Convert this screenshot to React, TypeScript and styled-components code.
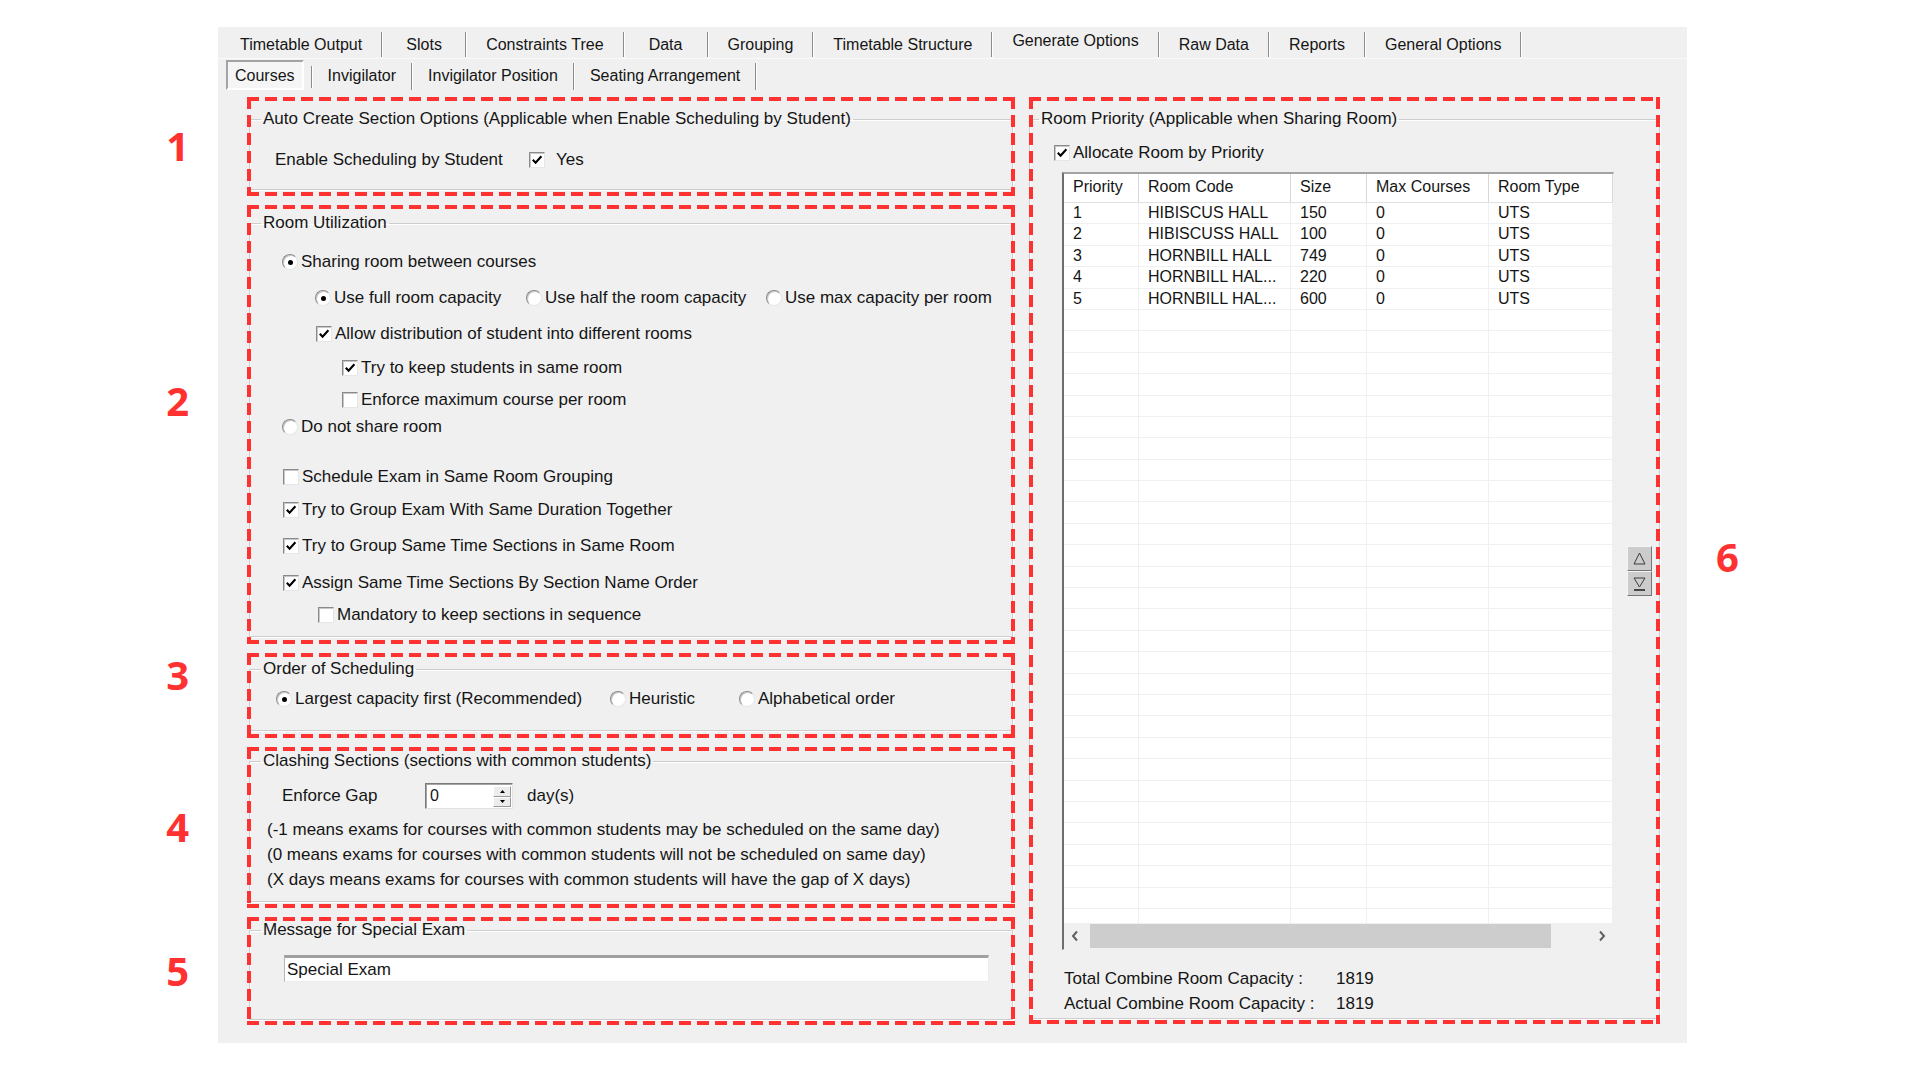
import styled, { createGlobalStyle } from "styled-components";

// Generate Options > Courses settings page of the exam timetabling tool

type RoomRow = {
    priority: string;
    code: string;
    size: string;
    maxCourses: string;
    type: string;
};

const rooms: RoomRow[] = [
    { priority: "1", code: "HIBISCUS HALL", size: "150", maxCourses: "0", type: "UTS" },
    { priority: "2", code: "HIBISCUSS HALL", size: "100", maxCourses: "0", type: "UTS" },
    { priority: "3", code: "HORNBILL HALL", size: "749", maxCourses: "0", type: "UTS" },
    { priority: "4", code: "HORNBILL HAL...", size: "220", maxCourses: "0", type: "UTS" },
    { priority: "5", code: "HORNBILL HAL...", size: "600", maxCourses: "0", type: "UTS" },
];

const mainTabs = [
    "Timetable Output",
    "Slots",
    "Constraints Tree",
    "Data",
    "Grouping",
    "Timetable Structure",
    "Generate Options",
    "Raw Data",
    "Reports",
    "General Options",
];

const subTabs = ["Courses", "Invigilator", "Invigilator Position", "Seating Arrangement"];

const GlobalStyle = createGlobalStyle`
    html, body {
        margin: 0;
        background: #ffffff;
    }
    body {
        font-family: "Liberation Sans", Arial, sans-serif;
        font-size: 17px;
        color: #151515;
    }
`;

const Page = styled.div`
    width: 1920px;
    height: 1080px;
    padding: 27px 0 0 218px;
    box-sizing: border-box;
`;

const Window = styled.div`
    width: 1469px;
    height: 1016px;
    background: #f0f0f0;
    display: flex;
    flex-direction: column;
`;

const TabStrip = styled.div`
    display: flex;
    height: 31px;
    padding-left: 2px;
    font-size: 16px;
`;

const Tab = styled.div<{ $active?: boolean }>`
    position: relative;
    display: flex;
    align-items: center;
    justify-content: center;
    min-width: 84px;
    padding: ${p => (p.$active ? "0 20px 4px" : "5px 20px 0")};
    box-sizing: border-box;
    white-space: nowrap;

    &::after {
        content: "";
        position: absolute;
        right: 0;
        top: 5px;
        bottom: 1px;
        width: 1px;
        background: #8c8c8c;
        box-shadow: 1px 0 0 #ffffff;
    }
`;

const SubTabStrip = styled.div`
    display: flex;
    height: 32px;
    padding-left: 8px;
    border-top: 1px solid #fafafa;
    box-sizing: border-box;
    font-size: 16px;
`;

const SubTab = styled.div<{ $active?: boolean }>`
    position: relative;
    display: flex;
    align-items: center;
    white-space: nowrap;
    padding: 2px ${p => (p.$active ? "7px" : "16px")} 0;
    margin: ${p => (p.$active ? "1px 8px 0 0" : "0")};
    box-sizing: border-box;
    background: ${p => (p.$active ? "#f5f5f5" : "transparent")};
    border: ${p => (p.$active ? "2px solid" : "none")};
    border-color: #a3a3a3 #ffffff #ffffff #a3a3a3;

    &::after {
        content: "";
        position: absolute;
        right: ${p => (p.$active ? "-10px" : "0")};
        top: 4px;
        bottom: 0;
        width: 1px;
        background: #8c8c8c;
        box-shadow: 1px 0 0 #ffffff;
    }
`;

const Body = styled.div`
    display: flex;
    gap: 14px;
    padding: 7px 0 0 29px;
`;

const Column = styled.div<{ $w: number }>`
    width: ${p => p.$w}px;
    display: flex;
    flex-direction: column;
    gap: 9px;
`;

const dash = (dir: string) =>
    `repeating-linear-gradient(${dir}, #ff3131 0 12px, transparent 12px 18px)`;

// red dashed callout frame around a settings group
const Marked = styled.section<{ $pt: number; $pb: number; $px?: number }>`
    position: relative;
    padding: ${p => p.$pt}px ${p => p.$px ?? 2}px ${p => p.$pb}px;

    &::after {
        content: "";
        position: absolute;
        inset: 0;
        pointer-events: none;
        background:
            ${dash("90deg")} top left / 100% 4px no-repeat,
            ${dash("90deg")} bottom left / 100% 4px no-repeat,
            ${dash("180deg")} top left / 4px 100% no-repeat,
            ${dash("180deg")} top right / 4px 100% no-repeat;
    }
`;

const Callout = styled.span<{ $side: "left" | "right"; $shift?: number }>`
    position: absolute;
    top: 50%;
    ${p => (p.$side === "left" ? "right: calc(100% + 58px);" : "left: calc(100% + 56px);")}
    transform: translateY(calc(-50% + ${p => p.$shift ?? 0}px));
    font-family: "Open Sans", "Liberation Sans", sans-serif;
    font-weight: 700;
    font-size: 40px;
    line-height: 1;
    color: #ff3131;
`;

const GroupBox = styled.fieldset<{ $h: number }>`
    margin: 0;
    padding: 0;
    min-width: 0;
    height: ${p => p.$h}px;
    box-sizing: border-box;
    border: 1px solid #cdcdcd;
    box-shadow: inset 1px 1px 0 #ffffff, 1px 1px 0 #ffffff;
    display: flex;
    flex-direction: column;
`;

const Legend = styled.legend<{ $ml?: number }>`
    margin-left: ${p => p.$ml ?? 11}px;
    padding: 0 2px;
    line-height: 18px;
`;

const Row = styled.div<{ $mt?: number; $indent?: number; $h?: number }>`
    display: flex;
    align-items: center;
    height: ${p => p.$h ?? 20}px;
    flex: none;
    white-space: nowrap;
    margin-top: ${p => p.$mt ?? 0}px;
    margin-left: ${p => p.$indent ?? 0}px;
`;

const Choice = styled.div<{ $w?: number }>`
    display: flex;
    align-items: center;
    flex: none;
    ${p => (p.$w ? `width: ${p.$w}px;` : "")}
`;

const Caption = styled.span<{ $w?: number; $ml?: number }>`
    display: inline-block;
    ${p => (p.$w ? `width: ${p.$w}px;` : "")}
    margin-left: ${p => p.$ml ?? 0}px;
`;

const CheckFrame = styled.span<{ $gap?: number }>`
    width: 16px;
    height: 16px;
    flex: none;
    box-sizing: border-box;
    margin-right: ${p => p.$gap ?? 3}px;
    background: #ffffff;
    border: 1px solid;
    border-color: #8a8a8a #e6e6e6 #e6e6e6 #8a8a8a;
    box-shadow: inset 1px 1px 0 #c8c8c8;
    display: inline-flex;
    align-items: center;
    justify-content: center;
`;

const RadioRing = styled.span<{ $on?: boolean }>`
    width: 16px;
    height: 16px;
    flex: none;
    box-sizing: border-box;
    margin-right: 3px;
    border-radius: 50%;
    background: #ffffff;
    border: 1px solid;
    border-color: #8a8a8a #e6e6e6 #e6e6e6 #8a8a8a;
    box-shadow: inset 1px 1px 0 #c8c8c8;
    display: inline-flex;
    align-items: center;
    justify-content: center;

    &::after {
        content: "";
        width: 5px;
        height: 5px;
        border-radius: 50%;
        background: ${p => (p.$on ? "#000000" : "transparent")};
    }
`;

function Check({ on, gap }: { on?: boolean; gap?: number }) {
    return (
        <CheckFrame $gap={gap}>
            {on && (
                <svg width="12" height="12" viewBox="0 0 12 12">
                    <path d="M1.8 5.8 L4.6 8.8 L10.4 2.2" fill="none" stroke="#000" strokeWidth="2.1" />
                </svg>
            )}
        </CheckFrame>
    );
}

const SpinBox = styled.div`
    width: 88px;
    height: 26px;
    box-sizing: border-box;
    display: flex;
    background: #ffffff;
    border: 1px solid;
    border-color: #7a7a7a #e3e3e3 #e3e3e3 #7a7a7a;
    box-shadow: inset 1px 1px 0 #a5a5a5;
`;

const SpinValue = styled.span`
    flex: 1;
    padding: 3px 0 0 4px;
    font-size: 16px;
`;

const SpinButtons = styled.div`
    width: 18px;
    display: flex;
    flex-direction: column;
    margin: 2px 1px 1px 0;
`;

const SpinButton = styled.div`
    flex: 1;
    display: flex;
    align-items: center;
    justify-content: center;
    background: #ececec;
    border: 1px solid;
    border-color: #ffffff #9a9a9a #9a9a9a #ffffff;
`;

const Note = styled.div<{ $mt?: number }>`
    margin: ${p => p.$mt ?? 0}px 0 0 17px;
    line-height: 25px;
    white-space: nowrap;
`;

const TextBox = styled.div`
    margin: 16px 0 0 34px;
    width: 705px;
    height: 27px;
    box-sizing: border-box;
    padding: 2px 0 0 2px;
    background: #ffffff;
    border-top: 3px solid #a0a0a0;
    border-left: 1px solid #b5b5b5;
    border-right: 1px solid #ececec;
    border-bottom: 1px solid #ececec;
`;

const GridArea = styled.div`
    display: flex;
    margin: 9px 0 0 32px;
    gap: 13px;
`;

const Grid = styled.div`
    width: 552px;
    height: 778px;
    box-sizing: border-box;
    display: flex;
    flex-direction: column;
    background: #ffffff;
    font-size: 16px;
    border-top: 2px solid #a3a3a3;
    border-left: 2px solid #6e6e6e;
    border-right: 1px solid #f0f0f0;
    border-bottom: 1px solid #f0f0f0;
`;

const cols = "75px 152px 76px 122px 1fr";

const HeaderRow = styled.div`
    display: grid;
    grid-template-columns: ${cols};
    height: 29px;
    flex: none;
    border-bottom: 1px solid #e2e2e2;
    box-sizing: border-box;
`;

const HeaderCell = styled.div`
    padding-left: 9px;
    line-height: 26px;
    white-space: nowrap;
    border-right: 1px solid #d8d8d8;
    box-shadow: inset -1px 0 0 #ffffff;
`;

const GridBody = styled.div`
    flex: 1;
    overflow: hidden;
`;

const DataRow = styled.div`
    display: grid;
    grid-template-columns: ${cols};
    height: 21.4px;
    box-sizing: border-box;
    border-bottom: 1px solid #f0f0f0;
`;

const DataCell = styled.div`
    padding-left: 9px;
    line-height: 20px;
    white-space: nowrap;
    overflow: hidden;
    border-right: 1px solid #f0f0f0;
`;

const HScroll = styled.div`
    height: 26px;
    flex: none;
    display: flex;
    align-items: stretch;
    background: #f0f0f0;
`;

const ScrollArrow = styled.div`
    width: 22px;
    display: flex;
    align-items: center;
    justify-content: center;
`;

const ScrollTrack = styled.div`
    flex: 1;
    display: flex;
    align-items: stretch;
    padding: 1px 0 1px 4px;
`;

const ScrollThumb = styled.div`
    background: #cdcdcd;
`;

const Mover = styled.div`
    align-self: center;
    margin-top: 20px;
    display: flex;
    flex-direction: column;
`;

const MoveButton = styled.div`
    width: 25px;
    height: 25px;
    box-sizing: border-box;
    display: flex;
    align-items: center;
    justify-content: center;
    background: #cccccc;
    border: 1px solid;
    border-color: #f5f5f5 #767676 #767676 #f5f5f5;
`;

const Stat = styled.div<{ $mt: number }>`
    display: flex;
    margin: ${p => p.$mt}px 0 0 34px;
    line-height: 20px;
    white-space: nowrap;
`;

function Chevron({ dir }: { dir: "left" | "right" }) {
    return (
        <svg width="8" height="12" viewBox="0 0 8 12">
            <path
                d={dir === "left" ? "M6 1.5 L2 6 L6 10.5" : "M2 1.5 L6 6 L2 10.5"}
                fill="none"
                stroke="#606060"
                strokeWidth="2"
            />
        </svg>
    );
}

function App() {
    const blankRows = Array.from({ length: 34 });

    return (
        <>
            <GlobalStyle />
            <Page>
                <Window>
                    <TabStrip>
                        {mainTabs.map(t => (
                            <Tab key={t} $active={t === "Generate Options"}>
                                {t}
                            </Tab>
                        ))}
                    </TabStrip>
                    <SubTabStrip>
                        {subTabs.map(t => (
                            <SubTab key={t} $active={t === "Courses"}>
                                {t}
                            </SubTab>
                        ))}
                    </SubTabStrip>

                    <Body>
                        <Column $w={768}>
                            <Marked $pt={13} $pb={6}>
                                <Callout $side="left" $shift={-1}>1</Callout>
                                <GroupBox $h={80}>
                                    <Legend>Auto Create Section Options (Applicable when Enable Scheduling by Student)</Legend>
                                    <Row $mt={22} $indent={25}>
                                        <Caption $w={254}>Enable Scheduling by Student</Caption>
                                        <Check on gap={11} />
                                        Yes
                                    </Row>
                                </GroupBox>
                            </Marked>

                            <Marked $pt={9} $pb={7}>
                                <Callout $side="left" $shift={-24}>2</Callout>
                                <GroupBox $h={423}>
                                    <Legend>Room Utilization</Legend>
                                    <Row $mt={20} $indent={32}>
                                        <RadioRing $on />
                                        Sharing room between courses
                                    </Row>
                                    <Row $mt={16} $indent={65}>
                                        <Choice $w={211}>
                                            <RadioRing $on />
                                            Use full room capacity
                                        </Choice>
                                        <Choice $w={240}>
                                            <RadioRing />
                                            Use half the room capacity
                                        </Choice>
                                        <Choice>
                                            <RadioRing />
                                            Use max capacity per room
                                        </Choice>
                                    </Row>
                                    <Row $mt={16} $indent={66}>
                                        <Check on />
                                        Allow distribution of student into different rooms
                                    </Row>
                                    <Row $mt={14} $indent={92}>
                                        <Check on />
                                        Try to keep students in same room
                                    </Row>
                                    <Row $mt={12} $indent={92}>
                                        <Check />
                                        Enforce maximum course per room
                                    </Row>
                                    <Row $mt={7} $indent={32}>
                                        <RadioRing />
                                        Do not share room
                                    </Row>
                                    <Row $mt={30} $indent={33}>
                                        <Check />
                                        Schedule Exam in Same Room Grouping
                                    </Row>
                                    <Row $mt={13} $indent={33}>
                                        <Check on />
                                        Try to Group Exam With Same Duration Together
                                    </Row>
                                    <Row $mt={16} $indent={33}>
                                        <Check on />
                                        Try to Group Same Time Sections in Same Room
                                    </Row>
                                    <Row $mt={17} $indent={33}>
                                        <Check on />
                                        Assign Same Time Sections By Section Name Order
                                    </Row>
                                    <Row $mt={12} $indent={68}>
                                        <Check />
                                        Mandatory to keep sections in sequence
                                    </Row>
                                </GroupBox>
                            </Marked>

                            <Marked $pt={7} $pb={7}>
                                <Callout $side="left" $shift={-21}>3</Callout>
                                <GroupBox $h={71}>
                                    <Legend>Order of Scheduling</Legend>
                                    <Row $mt={11} $indent={26}>
                                        <Choice $w={334}>
                                            <RadioRing $on />
                                            Largest capacity first (Recommended)
                                        </Choice>
                                        <Choice $w={129}>
                                            <RadioRing />
                                            Heuristic
                                        </Choice>
                                        <Choice>
                                            <RadioRing />
                                            Alphabetical order
                                        </Choice>
                                    </Row>
                                </GroupBox>
                            </Marked>

                            <Marked $pt={5} $pb={6}>
                                <Callout $side="left" $shift={-1}>4</Callout>
                                <GroupBox $h={150}>
                                    <Legend>Clashing Sections (sections with common students)</Legend>
                                    <Row $mt={13} $indent={32} $h={26}>
                                        <Caption $w={143}>Enforce Gap</Caption>
                                        <SpinBox>
                                            <SpinValue>0</SpinValue>
                                            <SpinButtons>
                                                <SpinButton>
                                                    <svg width="5" height="3" viewBox="0 0 5 3">
                                                        <path d="M0 3 L2.5 0 L5 3 Z" fill="#000" />
                                                    </svg>
                                                </SpinButton>
                                                <SpinButton>
                                                    <svg width="5" height="3" viewBox="0 0 5 3">
                                                        <path d="M0 0 L2.5 3 L5 0 Z" fill="#000" />
                                                    </svg>
                                                </SpinButton>
                                            </SpinButtons>
                                        </SpinBox>
                                        <Caption $ml={14}>day(s)</Caption>
                                    </Row>
                                    <Note $mt={8}>(-1 means exams for courses with common students may be scheduled on the same day)</Note>
                                    <Note>(0 means exams for courses with common students will not be scheduled on same day)</Note>
                                    <Note>(X days means exams for courses with common students will have the gap of X days)</Note>
                                </GroupBox>
                            </Marked>

                            <Marked $pt={4} $pb={5}>
                                <Callout $side="left">5</Callout>
                                <GroupBox $h={99}>
                                    <Legend>Message for Special Exam</Legend>
                                    <TextBox>Special Exam</TextBox>
                                </GroupBox>
                            </Marked>
                        </Column>

                        <Column $w={631}>
                            <Marked $pt={13} $pb={5} $px={0}>
                                <Callout $side="right" $shift={-4}>6</Callout>
                                <GroupBox $h={909}>
                                    <Legend $ml={9}>Room Priority (Applicable when Sharing Room)</Legend>
                                    <Row $mt={15} $indent={24}>
                                        <Check on />
                                        Allocate Room by Priority
                                    </Row>
                                    <GridArea>
                                        <Grid>
                                            <HeaderRow>
                                                <HeaderCell>Priority</HeaderCell>
                                                <HeaderCell>Room Code</HeaderCell>
                                                <HeaderCell>Size</HeaderCell>
                                                <HeaderCell>Max Courses</HeaderCell>
                                                <HeaderCell>Room Type</HeaderCell>
                                            </HeaderRow>
                                            <GridBody>
                                                {rooms.map(r => (
                                                    <DataRow key={r.priority}>
                                                        <DataCell>{r.priority}</DataCell>
                                                        <DataCell>{r.code}</DataCell>
                                                        <DataCell>{r.size}</DataCell>
                                                        <DataCell>{r.maxCourses}</DataCell>
                                                        <DataCell>{r.type}</DataCell>
                                                    </DataRow>
                                                ))}
                                                {blankRows.map((_, i) => (
                                                    <DataRow key={`blank-${i}`}>
                                                        <DataCell />
                                                        <DataCell />
                                                        <DataCell />
                                                        <DataCell />
                                                        <DataCell />
                                                    </DataRow>
                                                ))}
                                            </GridBody>
                                            <HScroll>
                                                <ScrollArrow>
                                                    <Chevron dir="left" />
                                                </ScrollArrow>
                                                <ScrollTrack>
                                                    <ScrollThumb style={{ width: 461 }} />
                                                </ScrollTrack>
                                                <ScrollArrow>
                                                    <Chevron dir="right" />
                                                </ScrollArrow>
                                            </HScroll>
                                        </Grid>
                                        <Mover>
                                            <MoveButton>
                                                <svg width="15" height="15" viewBox="0 0 15 15">
                                                    <path d="M2 13 L7.5 2 L13 13 Z" fill="none" stroke="#3a3a3a" strokeWidth="1" />
                                                </svg>
                                            </MoveButton>
                                            <MoveButton>
                                                <svg width="15" height="15" viewBox="0 0 15 15">
                                                    <path d="M2 2 L7.5 11 L13 2 Z" fill="none" stroke="#3a3a3a" strokeWidth="1" />
                                                    <path d="M2 14 H13" stroke="#1a1a1a" strokeWidth="1.5" />
                                                </svg>
                                            </MoveButton>
                                        </Mover>
                                    </GridArea>
                                    <Stat $mt={19}>
                                        <Caption $w={272}>Total Combine Room Capacity :</Caption>
                                        1819
                                    </Stat>
                                    <Stat $mt={5}>
                                        <Caption $w={272}>Actual Combine Room Capacity :</Caption>
                                        1819
                                    </Stat>
                                </GroupBox>
                            </Marked>
                        </Column>
                    </Body>
                </Window>
            </Page>
        </>
    );
}

export default App;
